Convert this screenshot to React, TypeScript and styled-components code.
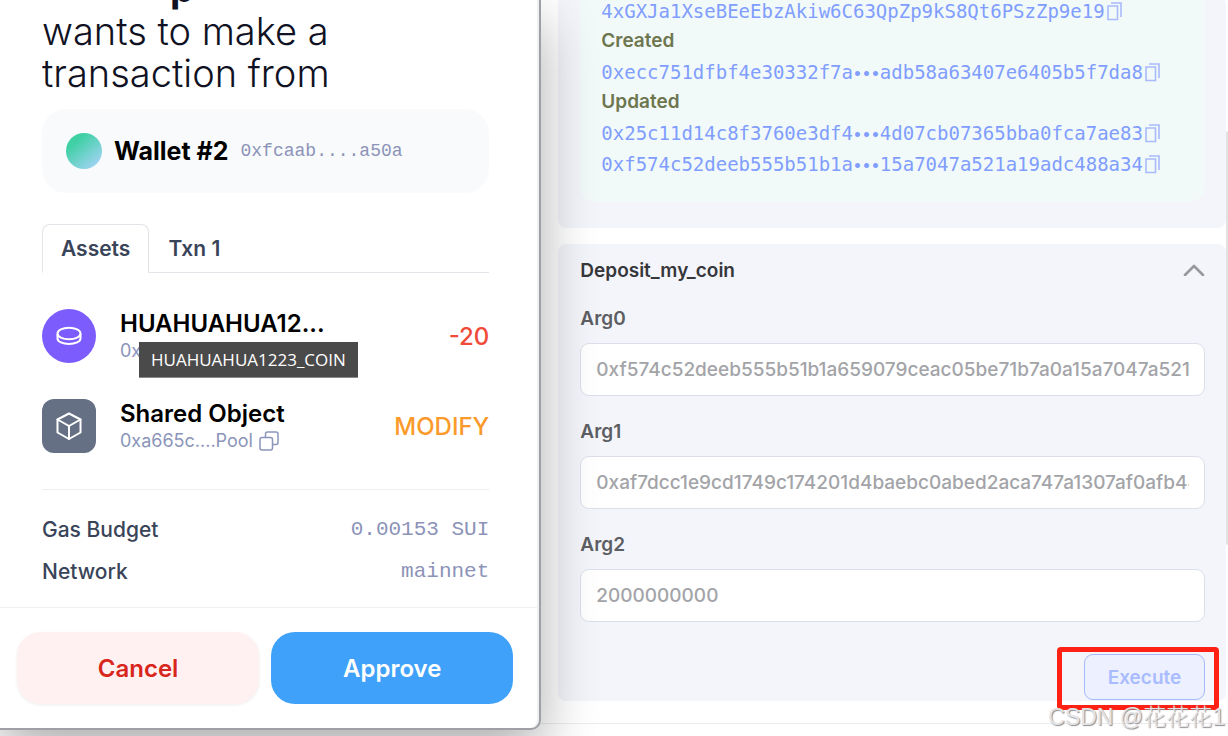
import React from "react";
import styled, { createGlobalStyle } from "styled-components";

const GlobalStyle = createGlobalStyle`
  *, *::before, *::after { box-sizing: border-box; }
  body {
    margin: 0;
    background: #ffffff;
    font-family: Inter, "Liberation Sans", sans-serif;
    overflow: hidden;
  }
  h1, h2, h3, p { margin: 0; }
  button, input { font: inherit; }
  button { cursor: pointer; }
`;

const mono = `"Liberation Mono", monospace`;

const Screen = styled.div`
  position: relative;
  display: flex;
  align-items: flex-start;
  min-height: 100vh;
  overflow: hidden;
`;

/* ---------- wallet popup ---------- */

const WalletWindow = styled.aside`
  position: relative;
  z-index: 1;
  flex: 0 0 calc(44% + 1px);
  background: #ffffff;
  border: solid #9fa0a6;
  border-width: 0 2px 2px 0;
  border-bottom-right-radius: 10px;
  box-shadow: inset -2px 0 0 #eef0f2, 0 22px 56px rgba(0, 0, 0, 0.32);
`;

const WalletBody = styled.div`
  padding: 0 50px 15px 42px;
`;

const Heading = styled.h1`
  margin-top: -34px;
  color: #101223;
  font-size: 38px;
  font-weight: 300;
  line-height: 42px;
`;

const Site = styled.strong`
  display: block;
  padding-left: 128px;
  font-weight: 700;
  line-height: 44px;
`;

const AccountCard = styled.section`
  display: flex;
  align-items: center;
  gap: 12px;
  height: 84px;
  margin-top: 15px;
  padding: 0 24px;
  border-radius: 24px;
  background: #f8fafc;
`;

const Avatar = styled.span`
  width: 36px;
  height: 36px;
  border-radius: 50%;
  background: linear-gradient(140deg, #3fd0a4 25%, #a3d3f5 90%);
`;

const AccountName = styled.strong`
  color: #000000;
  font-size: 25px;
  font-weight: 700;
`;

const AccountAddress = styled.span`
  color: #8c93b8;
  font-family: ${mono};
  font-size: 18px;
`;

const TabList = styled.div`
  display: flex;
  height: 49px;
  margin-top: 31px;
  border-bottom: 1px solid #e1e4e8;
`;

const Tab = styled.button<{ $active?: boolean }>`
  height: 49px;
  padding: 0 18px;
  border: 1px solid ${(p) => (p.$active ? "#e1e4e8" : "transparent")};
  border-bottom-color: ${(p) => (p.$active ? "#ffffff" : "transparent")};
  border-radius: 8px 8px 0 0;
  background: ${(p) => (p.$active ? "#ffffff" : "transparent")};
  color: #3a4459;
  font-size: 21px;
  font-weight: 600;
`;

const AssetList = styled.div`
  display: flex;
  flex-direction: column;
  gap: 36px;
  padding: 36px 0;
  border-bottom: 1px solid #eceef1;
`;

const AssetRow = styled.div`
  display: flex;
  align-items: center;
  gap: 24px;
  height: 54px;
`;

const AssetIcon = styled.span<{ $round?: boolean }>`
  display: flex;
  align-items: center;
  justify-content: center;
  width: 54px;
  height: 54px;
  border-radius: ${(p) => (p.$round ? "50%" : "12px")};
  background: ${(p) => (p.$round ? "#7c5cfc" : "#667085")};
  color: #ffffff;
`;

const AssetInfo = styled.div`
  position: relative;
  flex: 1;
`;

const AssetName = styled.h3`
  color: #000000;
  font-size: 24px;
  font-weight: 600;
  line-height: 30px;
`;

const AssetAddress = styled.p`
  display: flex;
  align-items: center;
  gap: 6px;
  color: #8b95ba;
  font-size: 18px;
  line-height: 24px;
`;

const AssetChange = styled.span<{ $tone: string }>`
  color: ${(p) => p.$tone};
  font-size: 24px;
  font-weight: 500;
`;

const Tooltip = styled.span`
  position: absolute;
  top: 33px;
  left: 19px;
  padding: 0 12px;
  border-bottom: 1px solid #8a8a8a;
  background: #4a4a4a;
  color: #ffffff;
  font-family: "Open Sans", "Noto Sans", sans-serif;
  font-size: 17px;
  line-height: 35px;
  white-space: nowrap;
`;

const Summary = styled.dl`
  margin: 0;
  padding-top: 18px;
`;

const SummaryRow = styled.div`
  display: flex;
  align-items: center;
  justify-content: space-between;
  height: 42px;
`;

const SummaryTerm = styled.dt`
  color: #3a4459;
  font-size: 21px;
  font-weight: 500;
`;

const SummaryValue = styled.dd`
  margin: 0;
  color: #8c93b8;
  font-family: ${mono};
  font-size: 21px;
`;

const WalletFooter = styled.footer`
  display: flex;
  gap: 12px;
  padding: 24px 26px 24px 17px;
  border-top: 1px solid #f0f1f3;
`;

const ActionButton = styled.button<{ $primary?: boolean }>`
  flex: 1;
  height: 72px;
  border: 0;
  border-radius: 24px;
  background: ${(p) => (p.$primary ? "#3fa1f9" : "#fff1f1")};
  box-shadow: ${(p) => (p.$primary ? "none" : "0 1px 3px rgba(16, 24, 40, 0.08)")};
  color: ${(p) => (p.$primary ? "#ffffff" : "#d8261c")};
  font-size: 24px;
  font-weight: 600;
`;

/* ---------- explorer page ---------- */

const Explorer = styled.main`
  flex: 1;
  min-width: 0;
`;

const Cards = styled.div`
  display: flex;
  flex-direction: column;
  gap: 16px;
  padding: 0 2px 22px 17px;
`;

const Card = styled.section`
  padding: 0 21px 1px 22px;
  border-radius: 8px;
  background: #f4f5fa;
`;

const ResultCard = styled(Card)`
  margin-top: -4px;
  padding-bottom: 26px;
`;

const Result = styled.div`
  padding: 0 20px 22px 21px;
  border-radius: 0 0 16px 16px;
  background: #f1faf8;
`;

const ResultLabel = styled.h3`
  padding-bottom: 2px;
  color: #6e7650;
  font-size: 19px;
  font-weight: 600;
  line-height: 28px;
`;

const HashRow = styled.div`
  display: flex;
  align-items: center;
  gap: 2px;
  height: 31px;
`;

const HashLink = styled.a`
  color: #809dff;
  font-family: "DejaVu Sans Mono", monospace;
  font-size: 19px;
  line-height: 31px;
  text-decoration: none;
  white-space: nowrap;
`;

const Dots = styled.span`
  font-family: "DejaVu Sans", sans-serif;
  font-size: 14px;
  font-weight: 700;
  line-height: 1;
`;

const IconButton = styled.button`
  display: flex;
  padding: 0;
  border: 0;
  background: none;
  color: inherit;
`;

const HashCopy = styled(IconButton)`
  color: #a9bbfc;
`;

const CardHeader = styled.header`
  display: flex;
  align-items: center;
  justify-content: space-between;
  height: 52px;
  color: #96989c;
`;

const CardTitle = styled.h2`
  color: #36373b;
  font-size: 19px;
  font-weight: 600;
`;

const Form = styled.form`
  display: flex;
  flex-direction: column;
  gap: 21px;
  padding-top: 8px;
`;

const Field = styled.div`
  display: flex;
  flex-direction: column;
  gap: 9px;
`;

const FieldLabel = styled.label`
  color: #5c5e63;
  font-size: 19px;
  font-weight: 600;
  line-height: 30px;
`;

const FieldInput = styled.input`
  width: 100%;
  height: 53px;
  padding: 0 15px;
  border: 1px solid #dcdfea;
  border-radius: 9px;
  outline: 0;
  background: #ffffff;
  color: #a3a4a8;
  font-size: 19px;
  font-weight: 500;
`;

const ExecuteSlot = styled.div`
  position: relative;
  align-self: flex-end;
  margin-top: 11px;
`;

const ExecuteButton = styled.button`
  width: 121px;
  height: 46px;
  border: 1px solid #a5bafb;
  border-radius: 9px;
  background: #edf0fe;
  color: #a9bcff;
  font-size: 19px;
  font-weight: 600;
`;

const Highlight = styled.span`
  position: absolute;
  inset: -7px -14px -10px -27px;
  border: 5px solid #ff2113;
  border-radius: 4px;
  pointer-events: none;
`;

const PageRule = styled.hr`
  margin: 0;
  border: 0;
  border-top: 1px solid #ececee;
`;

const ScrollThumb = styled.span`
  position: absolute;
  z-index: 2;
  top: 131px;
  right: 0;
  width: 2px;
  height: 414px;
  border-radius: 2px 0 0 2px;
  background: #e2e2e2;
`;

const Watermark = styled.span`
  position: absolute;
  z-index: 2;
  right: 3px;
  bottom: 4px;
  color: #e3e3e5;
  font-family: "Liberation Sans", "Noto Sans CJK SC", sans-serif;
  font-size: 23px;
  font-weight: 300;
  line-height: 30px;
  text-shadow: 1px 1px 1px #8c8c90;
  white-space: nowrap;
`;

/* ---------- icons ---------- */

const CoinIcon = () => (
  <svg width="28" height="22" viewBox="0 0 28 22" fill="none" stroke="currentColor" strokeWidth="2" aria-hidden="true">
    <ellipse cx="14" cy="8.500" rx="11.500" ry="5.800" />
    <path d="M2.500 9v4.500c0 3.200 5.200 5.500 11.500 5.500s11.500-2.300 11.500-5.500V9" />
  </svg>
);

const CubeIcon = () => (
  <svg
    width="28"
    height="30"
    viewBox="0 0 28 30"
    fill="none"
    stroke="currentColor"
    strokeWidth="2"
    strokeLinejoin="round"
    strokeLinecap="round"
    aria-hidden="true"
  >
    <path d="M14 2.500 25.500 8.500v13L14 28 2.500 21.500v-13z" />
    <path d="M2.500 8.500 14 15l11.500-6.500M14 15v13" />
  </svg>
);

const CopySquares = () => (
  <svg width="20" height="20" viewBox="0 0 20 20" fill="none" stroke="currentColor" strokeWidth="1.500" aria-hidden="true">
    <rect x="1" y="6.500" width="12.500" height="12.500" rx="2" />
    <path d="M6.500 6.500V3a2 2 0 0 1 2-2H17a2 2 0 0 1 2 2v8.500a2 2 0 0 1-2 2h-3.500" />
  </svg>
);

const CopySheets = () => (
  <svg width="16" height="20" viewBox="0 0 16 20" fill="none" stroke="currentColor" strokeWidth="1.600" aria-hidden="true">
    <path d="M1 4h9.500v13.500H1z" />
    <path d="M4 1h10v14" />
  </svg>
);

const ChevronUp = () => (
  <svg
    width="22"
    height="12"
    viewBox="0 0 22 12"
    fill="none"
    stroke="currentColor"
    strokeWidth="2.600"
    strokeLinecap="round"
    strokeLinejoin="round"
    aria-hidden="true"
  >
    <path d="M2 11l9-9 9 9" />
  </svg>
);

/* ---------- parts ---------- */

const Hash = ({ head, tail }: { head: string; tail?: string }) => (
  <HashRow>
    <HashLink href="#">
      {head}
      {tail && <Dots>•••</Dots>}
      {tail}
    </HashLink>
    <HashCopy type="button" aria-label="Copy">
      <CopySheets />
    </HashCopy>
  </HashRow>
);

const args = [
  { id: "arg0", label: "Arg0", value: "0xf574c52deeb555b51b1a659079ceac05be71b7a0a15a7047a521a19adc488a34" },
  { id: "arg1", label: "Arg1", value: "0xaf7dcc1e9cd1749c174201d4baebc0abed2aca747a1307af0afb44" },
  { id: "arg2", label: "Arg2", value: "2000000000" },
];

export default function App() {
  return (
    <>
      <GlobalStyle />
      <Screen>
        <WalletWindow>
          <WalletBody>
            <Heading>
              <Site>p</Site>
              wants to make a<br />
              transaction from
            </Heading>
            <AccountCard>
              <Avatar />
              <AccountName>Wallet #2</AccountName>
              <AccountAddress>0xfcaab....a50a</AccountAddress>
            </AccountCard>
            <TabList role="tablist">
              <Tab type="button" role="tab" aria-selected="true" $active>
                Assets
              </Tab>
              <Tab type="button" role="tab" aria-selected="false">
                Txn 1
              </Tab>
            </TabList>
            <AssetList>
              <AssetRow>
                <AssetIcon $round>
                  <CoinIcon />
                </AssetIcon>
                <AssetInfo>
                  <AssetName>HUAHUAHUA12...</AssetName>
                  <AssetAddress>0x</AssetAddress>
                  <Tooltip role="tooltip">HUAHUAHUA1223_COIN</Tooltip>
                </AssetInfo>
                <AssetChange $tone="#f04b38">-20</AssetChange>
              </AssetRow>
              <AssetRow>
                <AssetIcon>
                  <CubeIcon />
                </AssetIcon>
                <AssetInfo>
                  <AssetName>Shared Object</AssetName>
                  <AssetAddress>
                    0xa665c....Pool
                    <IconButton type="button" aria-label="Copy address">
                      <CopySquares />
                    </IconButton>
                  </AssetAddress>
                </AssetInfo>
                <AssetChange $tone="#fb9a2a">MODIFY</AssetChange>
              </AssetRow>
            </AssetList>
            <Summary>
              <SummaryRow>
                <SummaryTerm>Gas Budget</SummaryTerm>
                <SummaryValue>0.00153 SUI</SummaryValue>
              </SummaryRow>
              <SummaryRow>
                <SummaryTerm>Network</SummaryTerm>
                <SummaryValue>mainnet</SummaryValue>
              </SummaryRow>
            </Summary>
          </WalletBody>
          <WalletFooter>
            <ActionButton type="button">Cancel</ActionButton>
            <ActionButton type="button" $primary>
              Approve
            </ActionButton>
          </WalletFooter>
        </WalletWindow>

        <Explorer>
          <Cards>
            <ResultCard>
              <Result>
                <Hash head="4xGXJa1XseBEeEbzAkiw6C63QpZp9kS8Qt6PSzZp9e19" />
                <ResultLabel>Created</ResultLabel>
                <Hash head="0xecc751dfbf4e30332f7a" tail="adb58a63407e6405b5f7da8" />
                <ResultLabel>Updated</ResultLabel>
                <Hash head="0x25c11d14c8f3760e3df4" tail="4d07cb07365bba0fca7ae83" />
                <Hash head="0xf574c52deeb555b51b1a" tail="15a7047a521a19adc488a34" />
              </Result>
            </ResultCard>
            <Card>
              <CardHeader>
                <CardTitle>Deposit_my_coin</CardTitle>
                <IconButton type="button" aria-label="Collapse">
                  <ChevronUp />
                </IconButton>
              </CardHeader>
              <Form onSubmit={(e: React.FormEvent) => e.preventDefault()}>
                {args.map((arg) => (
                  <Field key={arg.id}>
                    <FieldLabel htmlFor={arg.id}>{arg.label}</FieldLabel>
                    <FieldInput id={arg.id} type="text" defaultValue={arg.value} />
                  </Field>
                ))}
                <ExecuteSlot>
                  <ExecuteButton type="submit">Execute</ExecuteButton>
                  <Highlight />
                </ExecuteSlot>
              </Form>
            </Card>
          </Cards>
          <PageRule />
        </Explorer>
        <ScrollThumb />
        <Watermark>CSDN @花花花1</Watermark>
      </Screen>
    </>
  );
}
